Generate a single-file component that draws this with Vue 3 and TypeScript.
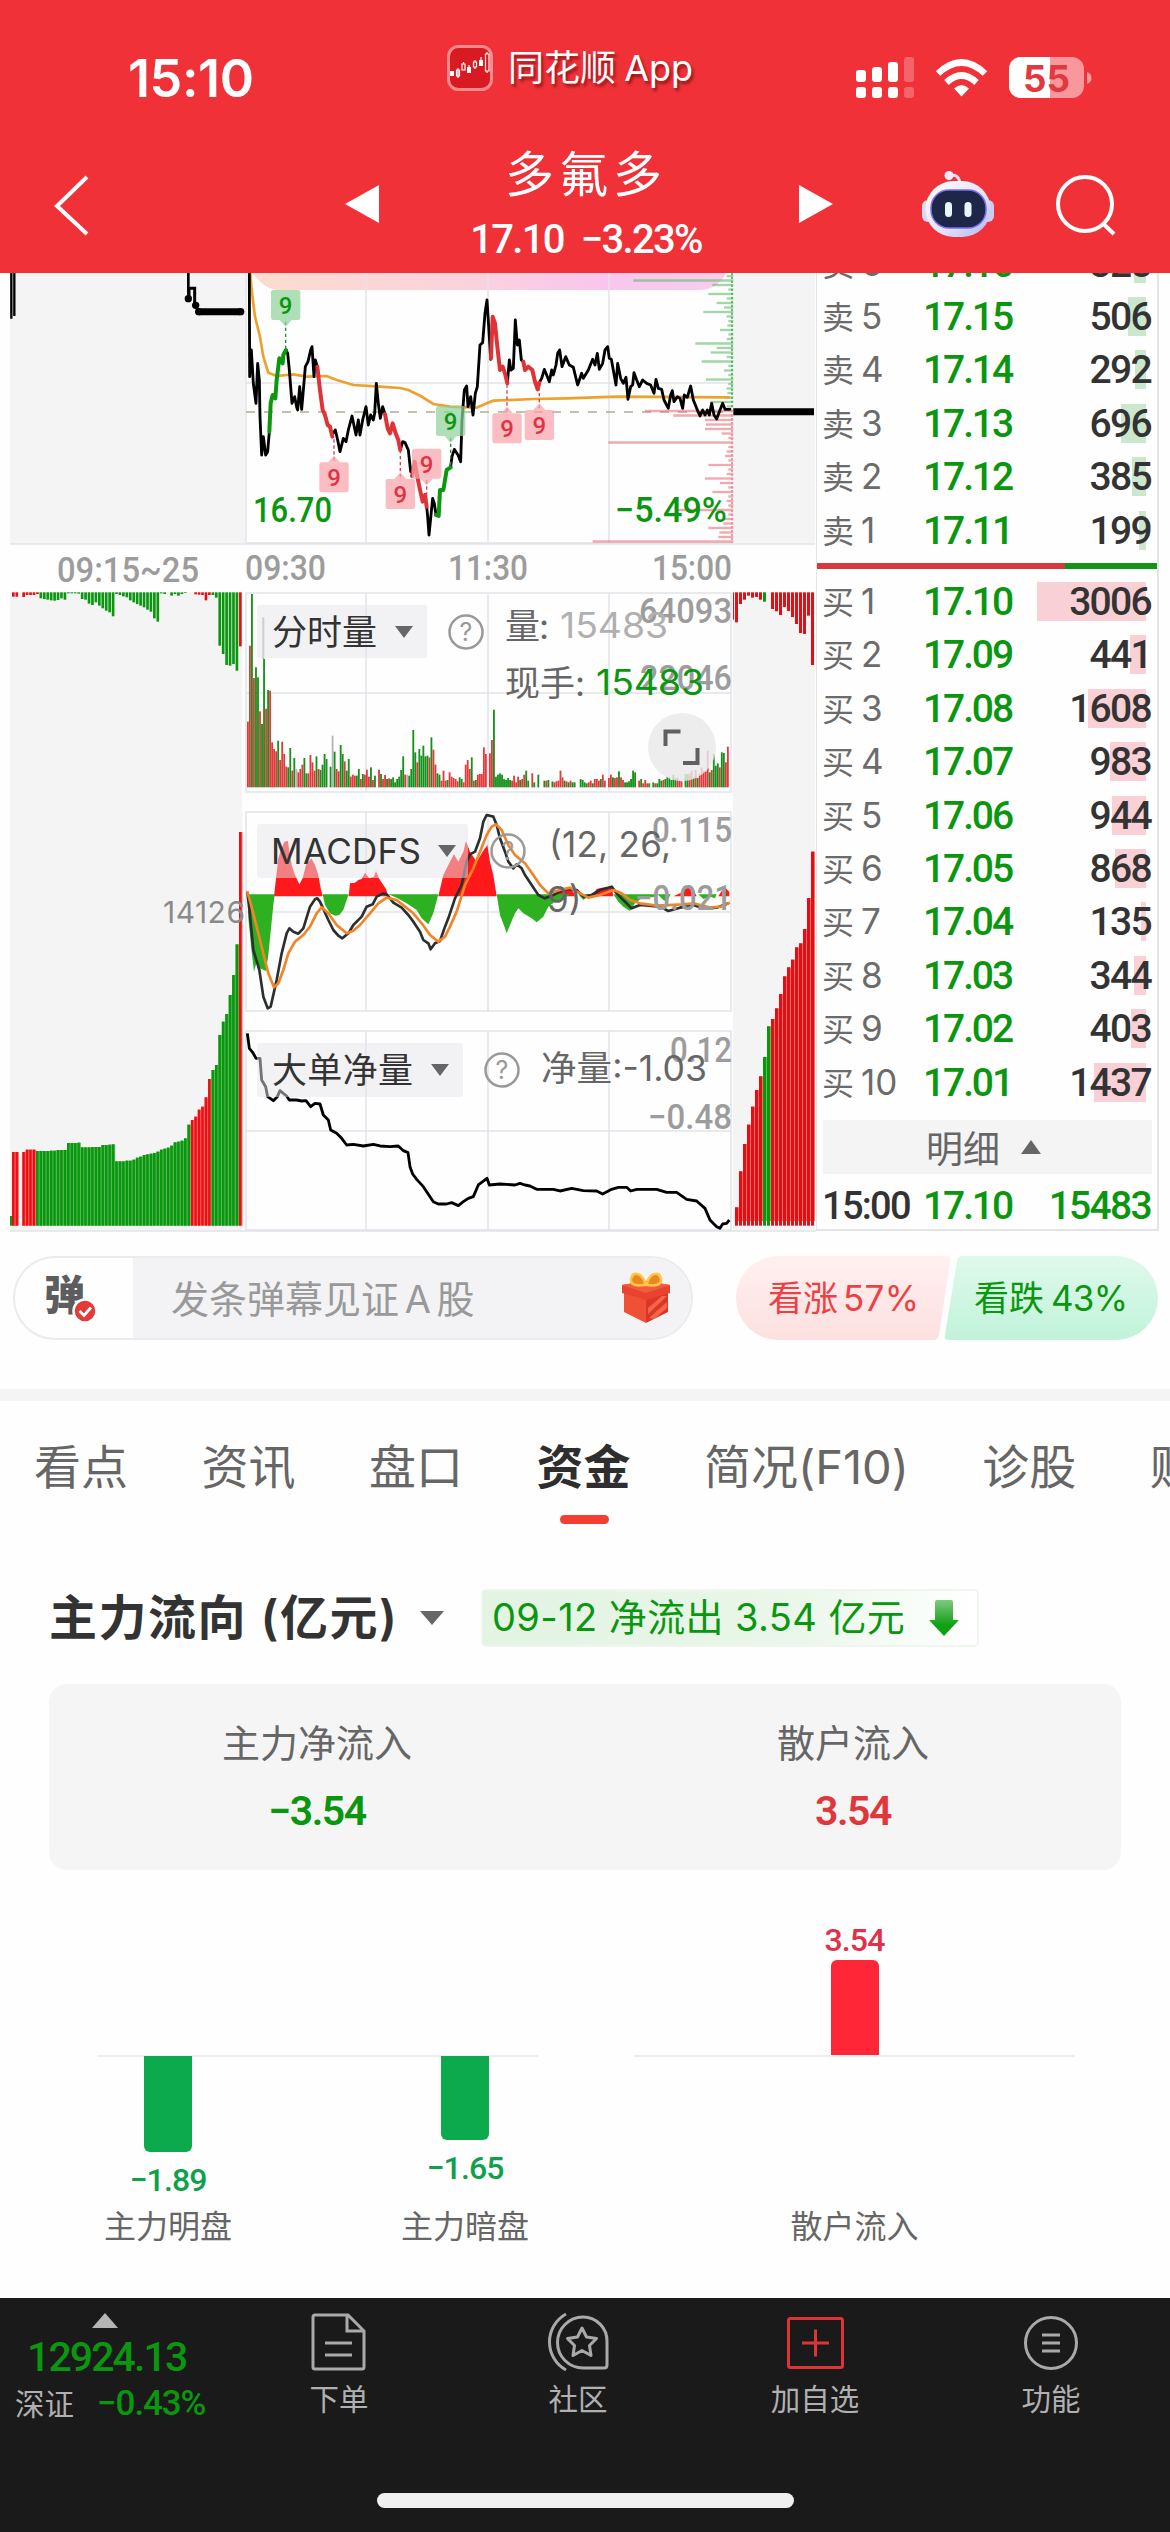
<script setup lang="ts">
interface Bar { x: number; h: number; c: string }
interface BookRow { label: string; level: number; price: string; vol: number }
interface Flag { x: number; y: number; up: boolean; kind: 'g' | 'r'; to: number }

const GREEN = '#0a960f'
const RED = '#e01015'

// Bars are written as colour letter + height, in thirds of a pixel
function parseBars(src: string, x0: number, step: number): Bar[] {
  return src.trim().split(/\s+/).map((t, i) => ({
    x: x0 + i * step,
    h: Number(t.slice(1)),
    c: t[0],
  })).filter((b) => b.h > 0)
}

const minuteVolume = parseBars(`
r197 r425 g580 r328 g360 g330 r228 g190 g385 r236 g292 r290 r135 r115 r108 g140 r82 r137 r100 r62 g60 g118 r50 g88 x55
r45 r55 r68 g88 g42 r42 r97 r75 r50 g93 r55 g52 g68 g100 g85 g0 g62 x155 g107 r55 r48 g127 g100 r78 g50 g85 r32 r38 r35
g35 g55 r25 g40 r38 r53 r32 g60 r22 g35 g0 r53 g40 r25 r37 g25 r27 g25 g30 g15 g25 g32 g52 g93 r38 x38 g35 g55 g172 g105
r75 g115 g95 g125 g93 g95 r90 g150 r113 r68 g42 g38 r20 r50 r20 g22 r45 r32 r28 r25 r18 g30 g25 r15 r68 r82 r55 g90 r20
g22 r38 r40 r40 r120 r100 g0 r102 r142 g233 g32 g38 g42 g38 g25 g22 g28 g22 r20 r35 r15 r32 g22 r25 r38 g50 g20 g0 r42
g15 g0 g38 g0 g0 g20 r20 g22 g0 g18 r15 r18 r20 r50 r30 g20 r18 g15 r20 g15 g15 g0 g0 g25 g22 g15 g12 r15 r20 g12 r25
r25 r20 g25 r38 r20 g0 r28 r38 g30 r28 r30 g48 r30 r22 g15 g15 g18 g25 g50 g45 g0 r20 g25 r12 r22 r12 g12 g0 g15 r12
g12 g25 g20 r22 g25 g32 g30 g22 g38 g28 r30 r20 r18 g0 g40 g40 r42 r50 g30 r52 g28 r40 r60 r50 r48 r110 g45 r52 g100
g65 g72 r60 g105 g103 r75 r122`, 741, 6.05)

const openTop = parseBars(`
r13 r13 g0 r14 r8 r8 r8 r5 g18 g20 g22 g24 g25 g23 g18 g22 g3 g3 g3 g4 g20 g22 g34 g38 g30 g40 g48 g55 g60 g72 g5 g8 g12
g15 g24 g30 g35 g40 g45 g52 g58 g78 g88 g3 g5 g0 g10 g5 g10 g5 g2 g0 r0 r6 r7 r8 r24 r8 g8 g16 g160 g185 g218 g220 g215
g235 r162`, 36, 10.32)

const openBottom = parseBars(`
r221 r221 g0 r221 r228 r228 r228 g224 g224 g224 g224 g225 g225 g227 g227 g227 g248 g248 g248 g249 g235 g235 g235 g236
g236 g236 g242 g242 g243 g244 g193 g193 g193 g195 g195 g198 g204 g207 g212 g214 g216 g218 g222 g228 g231 g234 g240 g250
g252 g255 g262 g303 r317 r327 r348 r357 r385 r440 g467 g482 g572 g612 g635 g692 g752 g844 r1181`, 36, 10.32)

const closeTop = parseBars(
  'r90 r35 r22 r10 r16 r14 r22 g28 g0 r50 r57 r68 r44 r56 r74 r95 r122 r125 r70 r218', 2205, 12)
const closeBottom = parseBars(
  'r55 r163 r245 r303 r357 r407 r448 g506 g598 r620 r652 r695 r748 r775 r798 r835 r847 r890 r983 r1122', 2205, 12)

const chipGreen = [980, 700, 937, 985, 925, 980, 950, 972, 910, 980, 985, 982, 960, 985, 980, 886, 950, 932, 980, 905,
  985, 972, 985, 918, 985, 980, 982, 975, 930, 980]
const chipRed = [735, 820, 915, 918, 915, 965, 985, 625, 985, 980, 975, 985, 925, 985, 980, 915, 960, 985, 937, 985,
  980, 985, 830, 985, 970, 970, 925, 958, 955, 578]

const flags: Flag[] = [
  { x: 857, y: 105, up: false, kind: 'g', to: 240 },
  { x: 1002, y: 622, up: true, kind: 'r', to: 500 },
  { x: 1201, y: 672, up: true, kind: 'r', to: 540 },
  { x: 1280, y: 581, up: false, kind: 'r', to: 690 },
  { x: 1352, y: 453, up: false, kind: 'g', to: 590 },
  { x: 1521, y: 475, up: true, kind: 'r', to: 345 },
  { x: 1618, y: 465, up: true, kind: 'r', to: 345 },
]

const blackRuns = [
  '748,0 749,320 754,240 760,340 768,400 773,280 778,330 780,440 785,555 790,500 797,555 803,545 808,485',
  '858,240 863,250 868,300 876,400 884,380 890,412 893,420 899,350 905,418 911,350 916,290 924,275 932,240 936,230 942,320 946,270 952,290',
  '999,490 1006,480 1013,510 1020,545 1030,505 1038,515 1045,480 1056,438 1068,495 1075,450 1080,495 1088,450 1098,410 1105,465 1112,435 1120,450 1124,430 1129,340 1135,400 1141,445 1148,410 1155,432',
  '1201,540 1208,515 1215,518 1225,540 1232,605 1240,600',
  '1280,710 1283,740 1287,795 1298,685 1303,700 1308,735',
  '1352,590 1356,560 1363,538 1374,555 1382,575 1386,450 1393,360 1400,348 1404,410 1412,380 1419,435 1426,370 1432,350 1440,225 1448,218 1455,130 1461,90 1468,200 1472,268',
  '1522,340 1528,270 1533,300 1540,295 1546,150 1552,225 1558,210 1564,270 1570,275',
  '1618,338 1625,325 1633,298 1640,315 1648,335 1655,300 1660,315 1668,285 1673,250 1679,240 1686,290 1697,260 1708,285 1720,292 1733,345 1745,310 1750,325 1765,300 1778,268 1785,285 1792,250 1798,298 1808,280 1815,240 1823,230 1828,265 1834,268 1848,345 1853,280 1862,325 1870,340 1878,322 1884,388 1892,350 1898,345 1902,308 1910,330 1918,350 1928,330 1940,340 1952,345 1962,370 1968,328 1975,355 1985,358 1992,390 2005,415 2012,375 2017,362 2022,395 2032,380 2040,385 2048,415 2053,375 2062,382 2072,348 2080,390 2090,415 2100,438 2108,420 2115,435 2122,420 2128,435 2135,400 2142,435 2150,447 2160,420 2168,400 2175,418 2190,418',
]
const redRuns = [
  '952,290 960,360 968,420 975,435 983,465 990,470 997,500',
  '1155,432 1163,475 1170,490 1178,460 1187,490 1195,510 1201,540',
  '1236,618 1244,575 1250,610 1258,650 1268,695 1275,675 1280,710',
  '1473,265 1478,140 1485,160 1492,230 1500,300 1508,290 1515,310 1522,340',
  '1570,275 1575,300 1585,290 1597,300 1605,335 1613,358 1618,338',
]
const greenRuns = [
  '808,485 812,400 818,375 826,385 830,330 838,265 848,280 850,255 858,240',
  '1308,735 1316,738 1320,660 1330,660 1340,600 1352,592',
]

const macdRed = [
  '822,934 828,880 835,820 845,790 853,770 864,768 868,800 875,840 885,870 898,898 908,880 918,840 934,820 945,840 955,870 962,910 968,934',
  '1046,934 1050,895 1065,893 1075,885 1085,882 1095,863 1108,880 1122,875 1128,858 1138,882 1150,900 1158,912 1165,934',
  '1315,934 1330,870 1350,830 1362,808 1375,830 1390,800 1398,768 1410,800 1430,830 1448,800 1462,780 1470,830 1480,870 1490,934',
  '1665,934 1680,903 1700,912 1715,915 1730,934', '1775,934 1790,912 1805,908 1835,905 1840,934',
  '2020,934 2040,925 2065,906 2080,915 2090,934', '2155,934 2165,918 2175,908 2188,920 2188,934',
]
const macdGreen = [
  '742,928 745,1000 755,1100 762,1160 770,1130 780,1150 798,1158 805,1110 815,1010 820,960 824,928',
  '968,928 975,960 990,985 1005,992 1018,990 1030,975 1040,945 1046,928',
  '1165,928 1190,938 1220,955 1250,975 1265,1000 1285,1018 1300,985 1315,928',
  '1490,928 1500,990 1515,1030 1520,1045 1530,1020 1545,985 1555,970 1570,985 1595,1000 1610,1012 1630,995 1645,965 1665,950 1690,942 1710,928',
  '1735,928 1750,945 1775,928', '1840,928 1855,950 1870,965 1890,978 1905,955 1925,940 1960,936 1975,930 1990,945 2000,950 2012,928',
  '2095,928 2110,942 2130,935 2145,940 2150,928',
]
const dif = '742,920 748,970 760,1095 778,1155 790,1235 803,1270 812,1265 830,1185 845,1105 860,1045 868,1030 880,1040 895,1046 910,1030 930,965 945,943 952,940 960,950 985,1005 1000,1035 1015,1052 1027,1060 1045,1045 1060,1020 1085,995 1100,965 1118,958 1130,935 1150,925 1162,930 1180,953 1205,968 1225,990 1240,1010 1260,1040 1270,1065 1285,1075 1292,1093 1305,1075 1320,1068 1335,1025 1345,1000 1365,940 1385,900 1400,830 1410,808 1425,800 1440,760 1450,710 1460,690 1480,695 1490,720 1500,760 1515,800 1525,830 1540,850 1550,838 1565,850 1575,870 1595,900 1615,930 1635,940 1660,930 1680,920 1700,912 1730,915 1750,935 1775,930 1800,915 1835,905 1850,925 1870,945 1895,970 1920,960 1980,965 2005,978 2040,968 2080,960 2110,970 2150,968 2185,955'
const dea = '742,920 752,955 770,1025 790,1105 805,1165 822,1207 835,1195 850,1155 865,1105 885,1070 910,1050 930,1025 950,985 965,967 985,985 1010,1020 1040,1045 1060,1037 1080,1020 1110,985 1135,955 1160,938 1190,945 1215,965 1240,985 1265,1015 1290,1050 1315,1070 1335,1055 1350,1025 1370,980 1395,900 1420,850 1440,800 1460,750 1475,725 1488,718 1505,735 1525,780 1545,810 1575,835 1600,870 1620,900 1645,925 1680,915 1710,908 1740,925 1765,938 1800,930 1840,915 1865,925 1890,945 1920,955 1970,962 2050,958 2080,955 2130,968 2165,965 2190,953'
const netFlow = '742,400 748,445 758,457 768,475 780,475 785,540 797,560 803,590 820,602 832,590 840,572 850,580 860,588 868,600 890,600 905,603 918,602 932,620 945,610 960,612 970,645 985,660 992,690 1010,700 1025,715 1040,735 1060,733 1090,738 1120,733 1140,738 1170,740 1195,738 1210,752 1224,758 1230,800 1238,822 1250,838 1270,860 1290,890 1300,905 1315,912 1340,912 1355,908 1375,917 1390,905 1405,895 1420,890 1435,855 1461,835 1468,855 1500,852 1545,855 1560,850 1575,855 1590,858 1610,868 1660,868 1680,873 1715,865 1750,872 1790,873 1808,882 1835,868 1855,862 1880,862 1892,873 1910,868 1970,868 2000,877 2030,877 2060,898 2090,903 2115,925 2130,960 2150,980 2160,985 2168,972 2180,970 2188,960'

const sells: BookRow[] = [[6, '17.16', 328], [5, '17.15', 506], [4, '17.14', 292], [3, '17.13', 696], [2, '17.12', 385], [1, '17.11', 199]]
  .map(([level, price, vol]) => ({ label: '卖', level: level as number, price: price as string, vol: vol as number }))
const buys: BookRow[] = [[1, '17.10', 3006], [2, '17.09', 441], [3, '17.08', 1608], [4, '17.07', 983], [5, '17.06', 944],
  [6, '17.05', 868], [7, '17.04', 135], [8, '17.03', 344], [9, '17.02', 403], [10, '17.01', 1437]]
  .map(([level, price, vol]) => ({ label: '买', level: level as number, price: price as string, vol: vol as number }))

const tabs = ['看点', '资讯', '盘口', '资金', '简况(F10)', '诊股', '财务']
const helps = [[466, 632], [508, 851], [502, 1070]]
const tone = (c: string) => (c === 'g' ? GREEN : RED)
const minuteTone = (c: string) => (c === 'g' ? '#16911c' : c === 'r' ? '#e23a3c' : '#b5b5b5')
</script>

<template>
  <div class="app">
    <header class="top">
      <div class="status">
        <span class="clock">15:10</span>
        <div class="source">
          <svg width="46" height="46" viewBox="0 0 46 46">
            <rect x="1.5" y="1.5" width="43" height="43" rx="10" fill="#d91a22" stroke="#f98a8c" stroke-width="3" />
            <g fill="#fff"><rect x="3" y="26" width="4" height="5" /><rect x="20" y="22" width="4" height="6" /><rect x="32" y="15" width="4" height="6" /></g>
            <g fill="none" stroke="#fff" stroke-width="1.2"><path d="M9.500 25h3v6h-3zM11 23v10M15 19h3v6h-3zM16.500 17v2M22 20v2M26.500 17h3v5h-3zM28 15v2M28 22v2M34 12v4M38.500 9h3.500v17h-3.500zM40 7v2M40 26v2" /></g>
          </svg>
          <span>同花顺 App</span>
        </div>
        <svg class="signal" width="238" height="44" viewBox="854 56 238 44">
          <g fill="#fff">
            <rect x="856" y="70" width="10" height="12" rx="3" /><rect x="872" y="67" width="10" height="15" rx="3" /><rect x="888" y="62" width="10" height="20" rx="3" />
            <rect x="856" y="87" width="10" height="11" rx="3" /><rect x="872" y="87" width="10" height="11" rx="3" /><rect x="888" y="87" width="10" height="11" rx="3" />
            <g opacity=".25"><rect x="904" y="57" width="10" height="25" rx="3" /><rect x="904" y="87" width="10" height="11" rx="3" /></g>
            <path d="M961.500 96.500l-7.500-8q7.500-7 15 0z" />
            <rect x="1009" y="57" width="75" height="41" rx="12" opacity=".5" />
            <path d="M1021 57h29v41h-29a12 12 0 0 1-12-12V69a12 12 0 0 1 12-12z" />
            <path d="M1087 72q4.500 1.500 4.500 6t-4.500 6z" opacity=".5" />
          </g>
          <g fill="none" stroke="#fff" stroke-width="6.500"><path d="M938 73.500q23.500-22 47 0" /><path d="M946.500 82.500q15-14 30 0" /></g>
          <text x="1023" y="91.500" font-size="37" font-weight="700" fill="#e2383f" textLength="47" lengthAdjust="spacingAndGlyphs">55</text>
        </svg>
      </div>
      <div class="titlebar">
        <svg class="back" width="40" height="64" viewBox="0 0 40 64"><path d="M35 4L5 33l30 28" fill="none" stroke="#fff" stroke-width="4" /></svg>
        <svg class="prev" width="34" height="38" viewBox="0 0 34 38"><path d="M34 0v38L0 19z" fill="#fff" /></svg>
        <div class="name">
          <h1>多氟多</h1>
          <p class="num"><span>17.10</span><span>−3.23%</span></p>
        </div>
        <svg class="next" width="34" height="38" viewBox="0 0 34 38"><path d="M0 0v38l34-19z" fill="#fff" /></svg>
        <svg class="robot" width="72" height="68" viewBox="0 0 72 68">
          <defs>
            <linearGradient id="head" x1="0" y1="0" x2="1" y2="1"><stop offset="0" stop-color="#fff" /><stop offset=".6" stop-color="#e3e0fb" /><stop offset="1" stop-color="#aab6f0" /></linearGradient>
          </defs>
          <path d="M28 6q8-3 10 7" fill="none" stroke="#e6dcf5" stroke-width="3" /><circle cx="27" cy="5.500" r="4.500" fill="#f3e9f8" />
          <rect x="0" y="30" width="12" height="22" rx="6" fill="#d9d8f6" /><rect x="60" y="30" width="12" height="22" rx="6" fill="#c9cdf6" />
          <rect x="3.500" y="11" width="65" height="56" rx="28" fill="url(#head)" />
          <rect x="9" y="20" width="55" height="38" rx="18" fill="#1e2747" stroke="#7a6cf0" stroke-width="1.500" />
          <rect x="23" y="32" width="7" height="15" rx="3.500" fill="#e8f6ff" /><rect x="42.500" y="32" width="7" height="15" rx="3.500" fill="#e8f6ff" />
        </svg>
        <svg class="find" width="62" height="62" viewBox="0 0 62 62"><g fill="none" stroke="#fff" stroke-width="4"><circle cx="30" cy="30" r="27" /><path d="M48.500 50L59 60" /></g></svg>
      </div>
    </header>

    <section class="market">
      <svg class="charts" width="816" height="959" viewBox="0 273 816 959">
        <defs>
          <linearGradient id="band"><stop offset="0" stop-color="#fddbd0" /><stop offset=".45" stop-color="#fcd2dc" /><stop offset=".75" stop-color="#f8c6ee" /><stop offset="1" stop-color="#f9cdec" /></linearGradient>
        </defs>
        <g fill="#f4f4f5">
          <rect x="10" y="273" width="235" height="271" /><rect x="733" y="273" width="82" height="271" />
          <rect x="10" y="592" width="232" height="639" /><rect x="733" y="592" width="82" height="639" />
        </g>
        <path d="M252 273h474q-8 17-28 17H276q-12-2-24-17z" fill="url(#band)" />
        <g fill="none" stroke="#e2e3e8" stroke-width="1.500">
          <path d="M246 273V543H732M366 273V543M488 273V543M609 273V543M246 383H732M10 544H815" />
          <path d="M246 593H731V792H246zM366 593V792M488 593V792M609 593V792M246 693H731" />
          <path d="M246 812H731V1011H246zM366 812V1011M488 812V1011M609 812V1011M246 912H731" />
          <path d="M246 1031H731V1230H246zM366 1031V1230M488 1031V1230M609 1031V1230M246 1131H731M10 1231H816" />
        </g>
        <path d="M246 412H731" stroke="#b5aa92" stroke-width="1.500" stroke-dasharray="9 9" />

        <g transform="translate(0 270) scale(.33333)">
          <g stroke="#000" fill="none">
            <path d="M34 0V146M43 0V138" stroke-width="7" /><path d="M565 0V85" stroke-width="8" />
            <path d="M567 85v-30h17v50" stroke-width="9" /><path d="M596 125H722M2200 425H2442" stroke-width="21" />
          </g>
          <circle cx="565" cy="86" r="11" /><circle cx="587" cy="106" r="11" /><circle cx="596" cy="125" r="11" /><circle cx="722" cy="125" r="11" />
          <g stroke="#5fbd6c" stroke-opacity=".6" stroke-width="7">
            <path v-for="(x, i) in chipGreen" :key="i" :d="`M${x + 1200} ${18 + i * 13.500}H2200`" />
          </g>
          <g stroke="#ea6f7c" stroke-opacity=".6" stroke-width="7">
            <path v-for="(x, i) in chipRed" :key="i" :d="`M${x + 1200} ${423 + i * 13.500}H2200`" />
          </g>
          <path d="M2196 8V410" stroke="#4fae5c" stroke-width="5" stroke-dasharray="7 5" />
          <path d="M2196 420V818" stroke="#e0909a" stroke-width="5" stroke-dasharray="7 5" />
          <polyline fill="none" stroke="#eda12f" stroke-width="8" points="750,0 755,60 765,140 780,200 790,260 805,308 830,318 880,313 920,320 980,318 1010,330 1060,345 1140,350 1200,354 1225,360 1262,378 1300,402 1350,410 1430,413 1460,400 1480,392 1600,387 1700,385 1850,380 2190,382" />
          <g fill="none" stroke-linejoin="round" stroke-linecap="round">
            <polyline v-for="p in blackRuns" :key="p" :points="p" stroke="#000" stroke-width="8.500" />
            <polyline v-for="p in redRuns" :key="p" :points="p" stroke="#e03338" stroke-width="12" />
            <polyline v-for="p in greenRuns" :key="p" :points="p" stroke="#0b980f" stroke-width="12" />
          </g>
          <g v-for="f in flags" :key="f.x" :fill="f.kind === 'g' ? '#8fd39a' : '#f6a3aa'">
            <path :d="`M${f.x} ${f.up ? f.y - 50 : f.y + 50}V${f.to}`" :stroke="f.kind === 'g' ? '#2a8a3c' : '#cf4456'" stroke-width="4" stroke-dasharray="10 8" />
            <rect :x="f.x - 44" :y="f.y - 45" width="88" height="90" rx="7" fill-opacity=".72" />
            <path :d="f.up ? `M${f.x - 18} ${f.y - 45}l18-20 18 20z` : `M${f.x - 18} ${f.y + 45}l18 20 18-20z`" fill-opacity=".72" />
            <text :x="f.x" :y="f.y + 27" font-size="72" font-weight="500" text-anchor="middle" class="num" :fill="f.kind === 'g' ? '#0a960f' : '#df3345'">9</text>
          </g>
        </g>

        <g class="num" font-size="35" font-weight="500" fill="#0a960f">
          <text x="253" y="522" textLength="79" lengthAdjust="spacingAndGlyphs">16.70</text>
          <text x="615" y="522" textLength="112" lengthAdjust="spacingAndGlyphs">−5.49%</text>
        </g>
        <g class="num" font-size="35" font-weight="500" fill="#9c9c9c">
          <text x="57" y="581.500" textLength="142" lengthAdjust="spacingAndGlyphs">09:15~25</text>
          <text x="245" y="579.500" textLength="81" lengthAdjust="spacingAndGlyphs">09:30</text>
          <text x="448" y="579.500" textLength="80" lengthAdjust="spacingAndGlyphs">11:30</text>
          <text x="652" y="579.500" textLength="80" lengthAdjust="spacingAndGlyphs">15:00</text>
        </g>

        <g transform="translate(0 585) scale(.33333)">
          <rect v-for="b in openTop" :key="b.x" :x="b.x" y="22" width="8" :height="b.h" :fill="tone(b.c)" />
          <rect v-for="b in closeTop" :key="b.x" :x="b.x" y="22" width="9" :height="b.h" :fill="tone(b.c)" />
          <rect x="2199" y="22" width="3" height="82" :fill="RED" />
          <path d="M790 97V222" stroke="#b5b5b5" stroke-width="6" />
          <rect v-for="b in minuteVolume" :key="b.x" :x="b.x" :y="607 - b.h" width="5.500" :height="b.h" :fill="minuteTone(b.c)" />
          <polygon v-for="p in macdRed" :key="p" :points="p" fill="#ff191b" />
          <polygon v-for="p in macdGreen" :key="p" :points="p" fill="#2db120" />
          <g fill="none" stroke-width="8" stroke-linejoin="round">
            <polyline :points="dif" stroke="#2b2f30" /><polyline :points="dea" stroke="#f08428" />
          </g>
        </g>
        <g transform="translate(0 900) scale(.33333)">
          <g v-for="b in openBottom" :key="b.x">
            <rect :x="b.x" :y="977 - b.h" width="10.300" :height="b.h" :fill="b.c === 'g' ? '#4fb950' : '#ff6a62'" />
            <rect :x="b.x" :y="977 - b.h" width="7.500" :height="b.h" :fill="b.c === 'g' ? GREEN : '#ea0f16'" />
          </g>
          <rect x="30" y="948" width="6" height="29" :fill="GREEN" />
          <g v-for="b in closeBottom" :key="b.x">
            <rect :x="b.x" :y="977 - b.h" width="12" :height="b.h - 14" :fill="b.c === 'g' ? '#4fc954' : '#ff6a62'" />
            <rect :x="b.x" :y="977 - b.h" width="9" :height="b.h" :fill="tone(b.c)" />
          </g>
          <polyline :points="netFlow" fill="none" stroke="#000" stroke-width="8.500" stroke-linejoin="round" />
        </g>

        <text x="163" y="923" font-size="30" fill="#8a8a8a" class="sans" textLength="82">14126</text>

        <g class="num" font-size="35" font-weight="500" fill="#9c9c9c">
          <text x="639" y="622.500" textLength="93" lengthAdjust="spacingAndGlyphs">64093</text>
          <text x="640" y="690" textLength="92" lengthAdjust="spacingAndGlyphs">22046</text>
          <text x="652" y="841.500" textLength="80" lengthAdjust="spacingAndGlyphs">0.115</text>
          <text x="635" y="909.500" textLength="97" lengthAdjust="spacingAndGlyphs">−0.021</text>
          <text x="670" y="1061.500" textLength="62" lengthAdjust="spacingAndGlyphs">0.12</text>
          <text x="648" y="1128.500" textLength="84" lengthAdjust="spacingAndGlyphs">−0.48</text>
        </g>

        <g fill="#e6e6e9" fill-opacity=".5">
          <rect x="257" y="605" width="170" height="53" rx="3" /><rect x="257" y="824" width="211" height="54" rx="3" /><rect x="257" y="1043" width="206" height="54" rx="3" />
        </g>
        <g fill="#666"><path d="M395 626h18l-9 12z" /><path d="M438 845h18l-9 12z" /><path d="M431 1064h18l-9 12z" /></g>
        <g class="sans" font-size="35" fill="#333">
          <text x="272" y="645" textLength="105">分时量</text>
          <text x="271" y="864" textLength="150">MACDFS</text>
          <text x="272" y="1083" textLength="141">大单净量</text>
        </g>
        <g v-for="h in helps" :key="h[0]">
          <circle :cx="h[0]" :cy="h[1]" r="16.500" fill="none" stroke="#999" stroke-width="2.500" />
          <text :x="h[0]" :y="h[1] + 9" font-size="25" text-anchor="middle" fill="#999" class="sans">?</text>
        </g>
        <g class="sans" font-size="35" fill="#666">
          <text x="505" y="639" textLength="44">量:</text>
          <text x="560" y="638" fill="#b0b0b0" textLength="108" lengthAdjust="spacingAndGlyphs">15483</text>
          <text x="505" y="696" textLength="80">现手:</text>
          <text x="596" y="695" fill="#0a960f" textLength="108" lengthAdjust="spacingAndGlyphs">15483</text>
          <text x="549" y="857" textLength="122">(12, 26,</text>
          <text x="547" y="912">9)</text>
          <text x="541" y="1081" textLength="166" lengthAdjust="spacingAndGlyphs">净量:-1.03</text>
        </g>
        <circle cx="682" cy="747" r="34" fill="#e9e9e9" fill-opacity=".82" />
        <path d="M665.500 746v-14.500h15M683 763h14.500v-15" fill="none" stroke="#606060" stroke-width="4" />
      </svg>

      <div class="book">
        <div v-for="r in sells" :key="'s' + r.level" class="row">
          <span class="lv">{{ r.label }} <i>{{ r.level }}</i></span><b class="num">{{ r.price }}</b>
          <span class="vol num"><em class="sell" :style="{ width: r.vol * 0.0363 + 'px' }"></em><span>{{ r.vol }}</span></span>
        </div>
        <div class="ratio"><span></span></div>
        <div v-for="r in buys" :key="'b' + r.level" class="row">
          <span class="lv">{{ r.label }} <i>{{ r.level }}</i></span><b class="num">{{ r.price }}</b>
          <span class="vol num"><em class="buy" :style="{ width: r.vol * 0.0363 + 'px' }"></em><span>{{ r.vol }}</span></span>
        </div>
        <div class="detail"><span>明细</span><svg width="20" height="14" viewBox="0 0 20 14"><path d="M0 14L10 0l10 14z" fill="#666" /></svg></div>
        <div class="row tick"><span class="time num">15:00</span><b class="num">17.10</b><span class="vol num green">15483</span></div>
      </div>
    </section>

    <section class="talk">
      <div class="barrage">
        <div class="mode">
          <span>弹</span>
          <svg width="26" height="26" viewBox="0 0 26 26"><circle cx="13" cy="13" r="11.500" fill="#e23b38" stroke="#fff" stroke-width="2.500" /><path d="M7.500 13l4.500 4.500 7-8" fill="none" stroke="#fff" stroke-width="2.800" /></svg>
        </div>
        <div class="entry">
          <span>发条弹幕见证 A 股</span>
          <svg width="50" height="52" viewBox="0 0 50 52">
            <path d="M3 20l22 7v24L3 40z" fill="#ee5136" /><path d="M47 20l-22 7v24l22-11z" fill="#dc3628" />
            <path d="M28 46l18-16v6L33 47zM27 36l14-12h5L27 42z" fill="#f4664a" />
            <path d="M1 13l24-4 24 4v8l-24 7L1 21z" fill="#e8432e" /><path d="M1 13l24-4 24 4-24 8z" fill="#f05b3d" />
            <g fill="#e88a1c" stroke="#ffc44a" stroke-width="2.500"><path d="M24 13Q9 15 10 7q2-8 9-4 5 4 5 10z" /><path d="M26 13q15 2 14-6-2-8-9-4-5 4-5 10z" /></g>
          </svg>
        </div>
      </div>
      <div class="vote">
        <svg width="422" height="84" viewBox="0 0 422 84">
          <defs>
            <linearGradient id="up" x1="0" y1="0" x2="0" y2="1"><stop offset="0" stop-color="#fff0ef" /><stop offset="1" stop-color="#fde0e0" /></linearGradient>
            <linearGradient id="down" x1="0" y1="0" x2="0" y2="1"><stop offset="0" stop-color="#e0f9ec" /><stop offset="1" stop-color="#c0f3d9" /></linearGradient>
          </defs>
          <path d="M42 0H210q5 0 4 5L203 79q-1 5-5 5H42a42 42 0 0 1 0-84z" fill="url(#up)" />
          <path d="M380 0H227q-5 0-6 5L209 79q-1 5 4 5H380a42 42 0 0 0 0-84z" fill="url(#down)" />
          <g class="sans" font-size="35">
            <text x="32" y="55" fill="#ee4043" textLength="70">看涨</text><text x="107" y="55" fill="#ee4043" textLength="76">57%</text>
            <text x="238" y="55" fill="#0a960f" textLength="70">看跌</text><text x="315" y="55" fill="#0a960f" textLength="77">43%</text>
          </g>
        </svg>
      </div>
    </section>

    <nav class="tabs">
      <span v-for="t in tabs" :key="t" :class="{ on: t === '资金' }">{{ t }}</span>
    </nav>

    <section class="flow">
      <div class="head">
        <h2>主力流向 (亿元)</h2>
        <svg width="24" height="14" viewBox="0 0 24 14"><path d="M0 0h24L12 14z" fill="#666" /></svg>
        <div class="badge">
          <span>09-12 净流出 3.54 亿元</span>
          <svg width="30" height="36" viewBox="0 0 30 36"><defs><linearGradient id="arr" x1="0" y1="0" x2="0" y2="1"><stop offset="0" stop-color="#7ec97e" /><stop offset=".7" stop-color="#0fa012" /></linearGradient></defs><path d="M6 2q0-2 2-2h14q2 0 2 2v18h6L15 36 0 20h6z" fill="url(#arr)" /></svg>
        </div>
      </div>
      <div class="card">
        <div><span>主力净流入</span><b class="num green">−3.54</b></div>
        <div><span>散户流入</span><b class="num red">3.54</b></div>
      </div>
      <div class="bars">
        <div class="group">
          <div class="col"><i class="fall a"></i><b class="num">−1.89</b><span>主力明盘</span></div>
          <div class="col"><i class="fall b"></i><b class="num">−1.65</b><span>主力暗盘</span></div>
        </div>
        <div class="group">
          <div class="col rise"><b class="num">3.54</b><i></i><span>散户流入</span></div>
        </div>
      </div>
    </section>

    <footer class="dock">
      <div class="items">
        <div class="index">
          <svg width="26" height="15" viewBox="0 0 26 15"><path d="M0 15L13 0l13 15z" fill="#b5b5b5" /></svg>
          <b class="num">12924.13</b>
          <p><span>深证</span><em class="num">−0.43%</em></p>
        </div>
        <div class="item">
          <svg width="60" height="60" viewBox="0 0 60 60"><g fill="none" stroke="#a9a9a9" stroke-width="3"><path d="M6 3h33l16 16v36q0 2-2 2H6q-2 0-2-2V5q0-2 2-2zM38 3v16h17M16 31h27M16 43h27" /></g></svg>
          <span>下单</span>
        </div>
        <div class="item">
          <svg width="64" height="60" viewBox="0 0 64 60"><g fill="none" stroke="#a9a9a9" stroke-width="3" stroke-linejoin="round"><path d="M37 5a25.500 25.500 0 1 0 0 51h21q3 0 3-3V30A24 24 0 0 0 37 5z" /><path d="M20 2a32 32 0 0 0 0 56" /><path d="M36 16l4.500 9 10 1.500-7 7 1.500 10-9-5-9 5 1.500-10-7-7 10-1.500z" /></g></svg>
          <span>社区</span>
        </div>
        <div class="item">
          <svg width="60" height="60" viewBox="0 0 60 60"><g fill="none" stroke="#dd3437" stroke-width="3"><rect x="3.500" y="6.500" width="54" height="49" rx="2" /><path d="M17 31h27M30.500 17.500v27" /></g></svg>
          <span>加自选</span>
        </div>
        <div class="item">
          <svg width="60" height="60" viewBox="0 0 60 60"><g fill="none" stroke="#a9a9a9" stroke-width="3"><circle cx="30" cy="31" r="25.500" /><path d="M21 23h18M21 31h18M21 39h18" /></g></svg>
          <span>功能</span>
        </div>
      </div>
      <div class="home"></div>
    </footer>
  </div>
</template>

<style>
body { margin: 0; background: #fefefe; }
</style>

<style scoped>
.app { width: 1170px; height: 2532px; overflow: hidden; display: flex; flex-direction: column; background: #fefefe; color: #333; font-family: Inter, "Noto Sans CJK SC", sans-serif; }
.num { font-family: Roboto, "Noto Sans CJK SC", sans-serif; }
.sans { font-family: Inter, "Noto Sans CJK SC", sans-serif; }
h1, h2, p { margin: 0; }
i, em { font-style: normal; }
svg { display: block; flex: none; }
.green { color: #0a960f; }
.red { color: #e0373c; }

.top { height: 273px; flex: none; background: #f03138; color: #fff; }
.status { height: 136px; display: flex; align-items: flex-start; }
.clock { margin: 48px 0 0 128px; width: 319px; font-size: 52px; line-height: 62px; font-weight: 600; letter-spacing: -.4px; }
.source { display: flex; margin-top: 45px; width: 407px; font-size: 36px; line-height: 48px; text-shadow: 2px 3px 3px rgba(90, 0, 0, .6); }
.source span { margin: -1px 0 0 15px; white-space: nowrap; letter-spacing: 0; word-spacing: -2px; }
.signal { margin-top: 56px; }
.titlebar { display: flex; align-items: flex-start; }
.back { margin: 37px 0 0 52px; }
.prev { margin: 49px 0 0 253px; }
.name { width: 420px; box-sizing: border-box; padding-right: 6px; text-align: center; }
.name h1 { margin-top: 9px; font-size: 49px; line-height: 60px; font-weight: 400; letter-spacing: 5px; }
.name p { display: flex; justify-content: center; gap: 17px; margin-top: 13px; font-size: 40px; line-height: 44px; font-weight: 500; letter-spacing: -1.700px; }
.next { margin-top: 49px; }
.robot { margin: 34px 0 0 89px; }
.find { margin: 38px 0 0 61px; }

.market { display: flex; height: 959px; flex: none; }
.book { width: 343px; height: 958px; overflow: hidden; box-sizing: border-box; border: solid #e4e4e6; border-width: 0 2px 2px 1px; }
.row { display: flex; align-items: center; height: 53.400px; padding-left: 5px; }
.row:first-child { margin-top: -36px; }
.lv { width: 101px; flex: none; font-size: 32px; line-height: 40px; color: #6b6b6b; white-space: nowrap; }
.lv i { font-size: 35px; margin-left: -2px; }
.row b { width: 110px; flex: none; font-size: 39px; line-height: 44px; font-weight: 500; letter-spacing: -2.100px; color: #0a960f; }
.vol { position: relative; width: 118px; flex: none; text-align: right; font-size: 39px; line-height: 44px; font-weight: 500; letter-spacing: -1.700px; }
.vol > span { position: relative; }
.vol em { position: absolute; right: 5px; top: 2px; height: 39px; }
.sell { background: #cbe8ce; }
.buy { background: #f9d0d5; }
.ratio { margin: 6px 0 6px; height: 6px; background: #129418; }
.ratio span { display: block; width: 248px; height: 6px; background: #d53a3e; }
.detail { display: flex; align-items: center; justify-content: center; gap: 21px; box-sizing: border-box; margin: 11px 5px 0 6px; height: 54px; padding-right: 8px; background: #f4f4f4; font-size: 37px; color: #666; }
.tick { height: 63px; }
.time { width: 101px; flex: none; font-size: 38px; font-weight: 500; letter-spacing: -1.700px; }
.vol.green { font-weight: 500; }

.talk { display: flex; height: 157px; flex: none; padding: 24px 0 0 13px; box-sizing: border-box; border-bottom: 0; }
.barrage { display: flex; width: 680px; height: 84px; box-sizing: border-box; border: 2px solid #ebebee; border-radius: 42px; overflow: hidden; }
.mode { position: relative; width: 118px; }
.mode span { display: block; margin: 8px 0 0 29px; font-size: 41px; line-height: 58px; font-weight: 900; color: #5d5d60; }
.mode svg { position: absolute; left: 57px; top: 40px; }
.entry { flex: 1; display: flex; align-items: center; justify-content: space-between; padding: 0 20px 0 38px; background: #f3f3f5; font-size: 38px; color: #999; }
.entry span { margin-top: -4px; word-spacing: -5px; }
.vote { margin-left: 43px; }

.tabs { display: flex; gap: 73.500px; height: 158px; flex: none; box-sizing: border-box; padding: 42px 0 0 34px; border-top: 12px solid #f4f4f4; font-size: 47px; line-height: 48px; color: #666; white-space: nowrap; }
.tabs span { position: relative; }
.tabs .on { color: #2e2e2e; font-weight: 700; }
.tabs .on::after { content: ""; position: absolute; left: 23px; top: 72px; width: 49px; height: 9px; border-radius: 5px; background: #f43e31; }

.flow { display: flex; flex-direction: column; height: 751px; flex: none; padding: 0 49px; }
.head { display: flex; align-items: center; margin-top: 42px; height: 58px; }
.head h2 { width: 371px; font-size: 48px; line-height: 58px; font-weight: 600; letter-spacing: 1.500px; white-space: nowrap; }
.badge { display: flex; align-items: center; margin-left: 37px; width: 498px; height: 58px; box-sizing: border-box; padding: 0 18px 0 9px; justify-content: space-between; border: 2px solid #eef6ee; border-radius: 5px; background: linear-gradient(90deg, #e3f4e3, #e9f6e9 60%, #fff); font-size: 38px; line-height: 50px; color: #0a960f; white-space: nowrap; }
.badge span { margin-top: -3px; letter-spacing: .4px; }
.card { display: flex; margin-top: 37px; height: 186px; border-radius: 18px; background: #f5f5f5; }
.card div { flex: 1; display: flex; flex-direction: column; align-items: center; }
.card span { margin-top: 33px; font-size: 38px; line-height: 52px; color: #666; }
.card b { margin-top: 17px; font-size: 41px; line-height: 50px; font-weight: 600; letter-spacing: -1.500px; }
.bars { display: flex; justify-content: space-between; margin: 58px 46px 0 48px; height: 330px; }
.group { width: 441px; display: flex; justify-content: space-around; background: linear-gradient(#ededed, #ededed) 0 127px / 100% 2px no-repeat; }
.group:first-child { justify-content: flex-start; }
.col { width: 142px; display: flex; flex-direction: column; align-items: center; }
.group:first-child .col:last-child { margin-left: 155px; }
.col i { width: 48px; }
.fall { margin-top: 128px; border-radius: 0 0 6px 6px; background: #0caa4c; }
.a { height: 96px; }
.b { height: 84px; }
.col b { margin-top: 10px; font-size: 32px; line-height: 36px; font-weight: 500; letter-spacing: -.9px; color: #0ea04a; }
.col span { margin-top: 8px; font-size: 32px; line-height: 42px; color: #666; white-space: nowrap; }
.b ~ span { margin-top: 20px; }
.rise b { margin-top: -7px; line-height: 39px; color: #e0304a; }
.rise i { height: 95px; border-radius: 6px 6px 0 0; background: #ff2638; }
.rise span { margin-top: 151px; }

.dock { flex: none; height: 234px; background: #1a1a1a; color: #b0b0b0; }
.items { display: grid; grid-template-columns: 220px 238px 240px 234px 238px; height: 195px; }
.index svg { margin: 15px 0 0 92px; }
.index b { display: block; margin: 8px 0 0 27px; font-size: 41px; line-height: 42px; font-weight: 500; letter-spacing: -1.900px; color: #0a960f; }
.index p { display: flex; gap: 23px; margin: 5px 0 0 15px; font-size: 29.500px; line-height: 42px; white-space: nowrap; }
.index em { font-size: 35px; font-weight: 500; letter-spacing: -1.100px; color: #0a960f; }
.item { display: flex; flex-direction: column; align-items: center; padding-top: 14px; font-size: 29.500px; line-height: 40px; }
.item span { margin-top: 7px; }
.home { width: 417px; height: 15px; margin: 0 auto; border-radius: 8px; background: #f0f0f0; }
</style>
